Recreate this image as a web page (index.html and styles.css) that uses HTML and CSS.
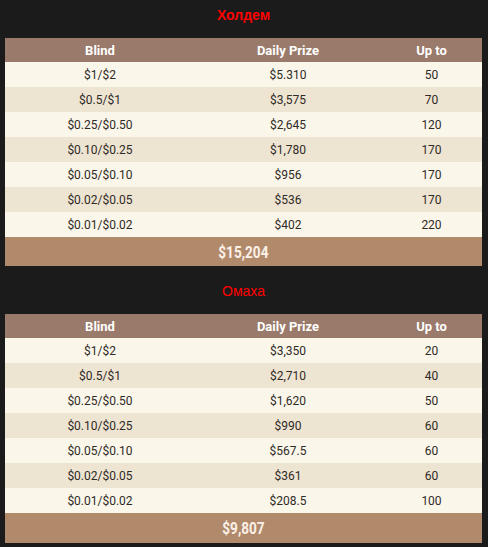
FILE: index.html
```html
<!DOCTYPE html>
<html>
<head>
<meta charset="utf-8">
<link rel="stylesheet" href="styles.css">
</head>
<body>
<section class="block">
  <h2 class="title title-bold">Холдем</h2>
  <table class="prize">
    <thead><tr><th>Blind</th><th>Daily Prize</th><th>Up to</th></tr></thead>
    <tbody>
      <tr><td>$1/$2</td><td>$5.310</td><td>50</td></tr>
      <tr><td>$0.5/$1</td><td>$3,575</td><td>70</td></tr>
      <tr><td>$0.25/$0.50</td><td>$2,645</td><td>120</td></tr>
      <tr><td>$0.10/$0.25</td><td>$1,780</td><td>170</td></tr>
      <tr><td>$0.05/$0.10</td><td>$956</td><td>170</td></tr>
      <tr><td>$0.02/$0.05</td><td>$536</td><td>170</td></tr>
      <tr><td>$0.01/$0.02</td><td>$402</td><td>220</td></tr>
    </tbody>
    <tfoot><tr><td colspan="3"><span class="total">$15,204</span></td></tr></tfoot>
  </table>
</section>
<section class="block block-second">
  <h2 class="title">Омаха</h2>
  <table class="prize">
    <thead><tr><th>Blind</th><th>Daily Prize</th><th>Up to</th></tr></thead>
    <tbody>
      <tr><td>$1/$2</td><td>$3,350</td><td>20</td></tr>
      <tr><td>$0.5/$1</td><td>$2,710</td><td>40</td></tr>
      <tr><td>$0.25/$0.50</td><td>$1,620</td><td>50</td></tr>
      <tr><td>$0.10/$0.25</td><td>$990</td><td>60</td></tr>
      <tr><td>$0.05/$0.10</td><td>$567.5</td><td>60</td></tr>
      <tr><td>$0.02/$0.05</td><td>$361</td><td>60</td></tr>
      <tr><td>$0.01/$0.02</td><td>$208.5</td><td>100</td></tr>
    </tbody>
    <tfoot><tr><td colspan="3" class="foot-tall"><span class="total">$9,807</span></td></tr></tfoot>
  </table>
</section>
</body>
</html>
```
FILE: styles.css
```css
html, body {
  margin: 0;
  padding: 0;
  background: #1b1b1b;
}
body {
  padding: 0 6px 0 5px;
  font-family: Roboto, "Liberation Sans", sans-serif;
}
.block-second {
  margin-top: 10px;
}
.title {
  margin: 0;
  padding: 7px 0 15px;
  line-height: 16px;
  text-align: center;
  color: #ff0000;
  font-family: "Liberation Sans", Arial, sans-serif;
  font-size: 14px;
  font-weight: 400;
}
.title-bold {
  font-weight: 700;
}
.prize {
  width: 100%;
  border-collapse: collapse;
  table-layout: fixed;
}
.prize th:nth-child(1) { width: 190px; }
.prize th:nth-child(2) { width: 186px; }
.prize thead tr {
  background: #9a7a6a;
}
.prize th {
  height: 24px;
  padding: 0;
  color: #fff;
  font-size: 13px;
  font-weight: 700;
  text-align: center;
}
.prize td {
  height: 25px;
  padding: 0;
  text-align: center;
  font-size: 12px;
  color: #2e2a26;
}
.prize tbody tr:nth-child(odd) { background: #fbf6ea; }
.prize tbody tr:nth-child(even) { background: #eee4d2; }
.prize tfoot td {
  height: 29px;
  background: #b1896b;
  color: #fbf1e6;
}
.prize tfoot td.foot-tall {
  height: 30px;
}
.total {
  display: inline-block;
  font-size: 17px;
  font-weight: 700;
  transform: scaleX(0.8);
}
```
